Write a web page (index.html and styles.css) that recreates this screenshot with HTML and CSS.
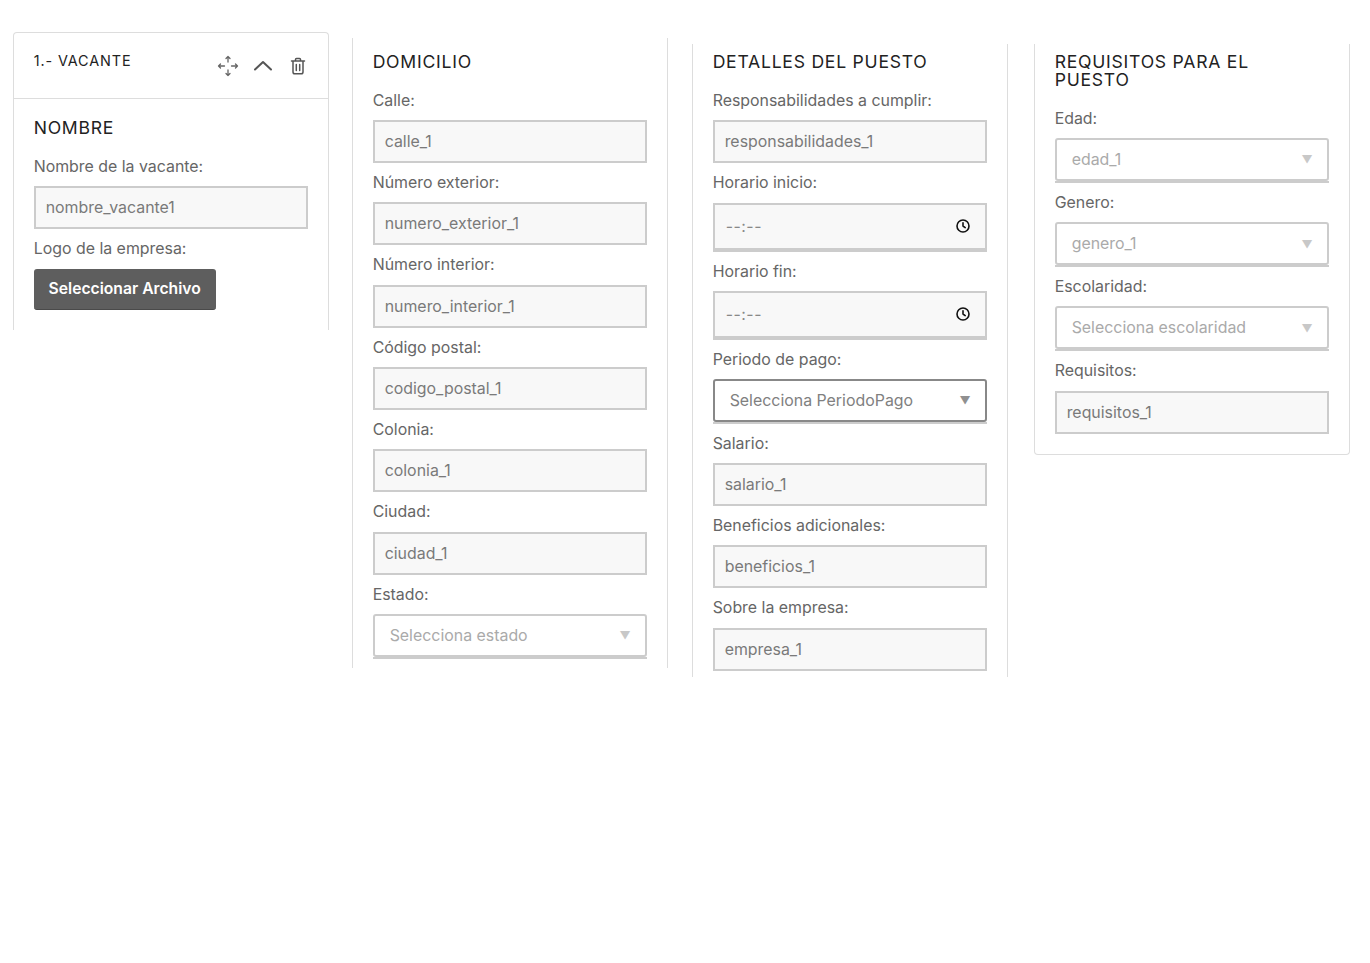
FILE: index.html
```html
<!DOCTYPE html>
<html lang="es">
<head>
<meta charset="utf-8">
<title>Vacante</title>
<link rel="stylesheet" href="styles.css">
</head>
<body>
<main class="board">
  <section class="card card-vacante">
    <header class="card-head">
      <span class="card-title">1.- VACANTE</span>
      <div class="card-tools">
        <svg class="tool" width="24" height="24" viewBox="0 0 24 24" fill="none" stroke="#666" stroke-width="1.3" stroke-linecap="round" stroke-linejoin="round"><path d="M12 2.500v5.500M12 16v5.500M2.500 12h6M15.500 12h6M10 4.500l2-2 2 2M10 19.500l2 2 2-2M4.500 10l-2 2 2 2M19.500 10l2 2-2 2"/></svg>
        <svg class="tool" width="24" height="24" viewBox="0 0 24 24" fill="none" stroke="#555" stroke-width="2" stroke-linecap="round" stroke-linejoin="round"><path d="M4 15.500l8-7.500 8 7.500"/></svg>
        <svg class="tool" width="24" height="24" viewBox="0 0 24 24" fill="none" stroke="#555" stroke-width="1.5" stroke-linecap="round" stroke-linejoin="round"><path d="M5.500 7h13M9.500 7V5.500a1 1 0 0 1 1-1h3a1 1 0 0 1 1 1V7M7 7v11a1.800 1.800 0 0 0 1.800 1.800h6.400a1.800 1.800 0 0 0 1.800-1.800V7M10.300 10.500v6M13.700 10.500v6"/></svg>
      </div>
    </header>
    <div class="card-body">
      <h2 class="heading">NOMBRE</h2>
      <div class="row"><label class="label">Nombre de la vacante:</label><div class="field">nombre_vacante1</div></div>
      <div class="row"><label class="label">Logo de la empresa:</label><button class="file-btn" type="button">Seleccionar Archivo</button></div>
    </div>
  </section>

  <section class="card card-domicilio">
    <h2 class="heading">DOMICILIO</h2>
    <div class="row"><label class="label">Calle:</label><div class="field">calle_1</div></div>
    <div class="row"><label class="label">Número exterior:</label><div class="field">numero_exterior_1</div></div>
    <div class="row"><label class="label">Número interior:</label><div class="field">numero_interior_1</div></div>
    <div class="row"><label class="label">Código postal:</label><div class="field">codigo_postal_1</div></div>
    <div class="row"><label class="label">Colonia:</label><div class="field">colonia_1</div></div>
    <div class="row"><label class="label">Ciudad:</label><div class="field">ciudad_1</div></div>
    <div class="row"><label class="label">Estado:</label><div class="select-wrap"><div class="select"><span>Selecciona estado</span><span class="caret">▼</span></div></div></div>
  </section>

  <section class="card card-puesto">
    <h2 class="heading">DETALLES DEL PUESTO</h2>
    <div class="row"><label class="label">Responsabilidades a cumplir:</label><div class="field">responsabilidades_1</div></div>
    <div class="row"><label class="label">Horario inicio:</label><div class="time"><span class="time-text">--:--</span><svg width="16" height="16" viewBox="0 0 16 16" fill="none" stroke="#111" stroke-width="1.6" stroke-linecap="round" stroke-linejoin="round"><circle cx="8" cy="8" r="6"/><path d="M8 4.800V8l2.200 1.600"/></svg></div></div>
    <div class="row"><label class="label">Horario fin:</label><div class="time"><span class="time-text">--:--</span><svg width="16" height="16" viewBox="0 0 16 16" fill="none" stroke="#111" stroke-width="1.6" stroke-linecap="round" stroke-linejoin="round"><circle cx="8" cy="8" r="6"/><path d="M8 4.800V8l2.200 1.600"/></svg></div></div>
    <div class="row"><label class="label">Periodo de pago:</label><div class="select-wrap"><div class="select select-active"><span>Selecciona PeriodoPago</span><span class="caret">▼</span></div></div></div>
    <div class="row"><label class="label">Salario:</label><div class="field">salario_1</div></div>
    <div class="row"><label class="label">Beneficios adicionales:</label><div class="field">beneficios_1</div></div>
    <div class="row"><label class="label">Sobre la empresa:</label><div class="field">empresa_1</div></div>
  </section>

  <section class="card card-requisitos">
    <h2 class="heading">REQUISITOS PARA EL PUESTO</h2>
    <div class="row"><label class="label">Edad:</label><div class="select-wrap"><div class="select"><span>edad_1</span><span class="caret">▼</span></div></div></div>
    <div class="row"><label class="label">Genero:</label><div class="select-wrap"><div class="select"><span>genero_1</span><span class="caret">▼</span></div></div></div>
    <div class="row"><label class="label">Escolaridad:</label><div class="select-wrap"><div class="select"><span>Selecciona escolaridad</span><span class="caret">▼</span></div></div></div>
    <div class="row"><label class="label">Requisitos:</label><div class="field">requisitos_1</div></div>
  </section>
</main>
</body>
</html>
```

FILE: styles.css
```css
* { box-sizing: border-box; }
html, body { margin: 0; background: #fff; }
body { font-family: Inter, "Liberation Sans", sans-serif; color: #666; height: 963px; overflow: hidden; }

.board { display: flex; align-items: flex-start; padding-left: 12.67px; }

.card { width: 316px; border: 1px solid #ddd; border-top: 0; border-bottom: 0; background: #fff; padding: 0 20px; }

.card-vacante { margin-top: 32px; height: 298px; padding: 0; border-top: 1px solid #ddd; border-radius: 4px 4px 0 0; }
.card-domicilio { margin: 38px 0 0 23px; height: 630px; padding-top: 15px; }
.card-puesto { margin: 44px 0 0 24px; height: 633px; padding-top: 9px; }
.card-requisitos { margin: 44px 0 0 26px; height: 411px; padding-top: 9px; border-bottom: 1px solid #ddd; border-radius: 0 0 4px 4px; }

.card-head { height: 66px; border-bottom: 1px solid #ddd; padding: 0 20px; display: flex; justify-content: space-between; }
.card-title { font-size: 14.4px; line-height: 18px; letter-spacing: 0.9px; color: #222; padding-top: 19px; }
.card-tools { display: flex; gap: 11px; padding-top: 21px; margin-right: -2px; }
.tool { display: block; }

.card-body { padding: 20px 20px 0; }

.heading { margin: 0 0 9.67px; font-weight: 400; font-size: 17.6px; line-height: 18px; letter-spacing: 0.75px; color: #222; }
.card-body .heading { margin-bottom: 10px; }
.card-puesto .heading { margin-bottom: 10px; }
.card-requisitos .heading { padding-right: 20px; }

.row { display: flex; flex-direction: column; }
.label { display: block; height: 39.33px; padding-top: 10px; font-size: 15.9px; line-height: 20px; color: #666; }

.field { height: 43px; border: 2px solid #ccc; background: #f8f8f8; padding: 0 10px; font-size: 15.9px; line-height: 39px; color: #7a7a7a; }

.time { height: 49px; border: 2px solid #ccc; border-bottom-width: 4px; background: #f8f8f8; padding: 0 13.5px 0 11px; display: flex; align-items: center; justify-content: space-between; font-size: 15.9px; color: #888; }
.time-text { letter-spacing: 0.5px; }

.select-wrap { height: 44.67px; border-bottom: 2px solid #ccc; }
.card-puesto .select-wrap { height: 44.33px; }
.card-requisitos .select-wrap { height: 44.9px; }
.select { height: 100%; border: 2px solid #ccc; border-radius: 3px; background: #fff; padding: 0 14px 0 15px; display: flex; align-items: center; justify-content: space-between; font-size: 15.9px; color: #aaa; }
.select-active { border-color: #888; color: #808080; }
.caret { font-size: 11px; color: #c8c8c8; }
.select-active .caret { color: #909090; }

.file-btn { display: block; width: 182px; height: 41px; border: 0; border-bottom: 1px solid #4a4a4a; border-radius: 3px; background: #5e5e5e; color: #fff; font-family: inherit; font-size: 15.7px; font-weight: 600; padding: 0; }
```
